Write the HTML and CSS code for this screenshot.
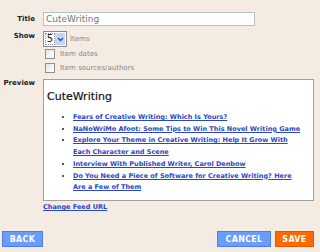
FILE: index.html
```html
<!DOCTYPE html>
<html lang="en">
<head>
    <meta charset="UTF-8">
    <title>Feed settings</title>
    <link rel="stylesheet" href="styles.css">
</head>
<body>
    <div class="page">
        <form class="feed-form">
            <label class="field-label" for="title">Title</label>
            <div class="field">
                <input class="title-input" id="title" type="text" value="CuteWriting">
            </div>

            <label class="field-label show-label" for="show">Show</label>
            <div class="field">
                <div class="show-row">
                    <span class="select-box">
                        <span class="select-value">5</span>
                        <span class="select-arrow">
                            <svg width="7" height="5" viewBox="0 0 7 5"><path d="M1 1 L3.5 3.5 L6 1" fill="none" stroke="#2b4fa8" stroke-width="1.4"/></svg>
                        </span>
                    </span>
                    <span class="muted">Items</span>
                </div>
                <label class="check-row"><span class="check"></span>Item dates</label>
                <label class="check-row"><span class="check"></span>Item sources/authors</label>
            </div>

            <div class="field-label preview-label">Preview</div>
            <div class="field">
                <div class="preview">
                    <h2>CuteWriting</h2>
                    <ul>
                        <li><a href="#">Fears of Creative Writing: Which Is Yours?</a></li>
                        <li><a href="#">NaNoWriMo Afoot: Some Tips to Win This Novel Writing Game</a></li>
                        <li><a href="#">Explore Your Theme in Creative Writing: Help It Grow With Each Character and Scene</a></li>
                        <li><a href="#">Interview With Published Writer, Carol Denbow</a></li>
                        <li><a href="#">Do You Need a Piece of Software for Creative Writing? Here Are a Few of Them</a></li>
                    </ul>
                </div>
                <a class="change-link" href="#">Change Feed URL</a>
            </div>
        </form>

        <div class="actions">
            <button class="btn btn-back">BACK</button>
            <div class="actions-right">
                <button class="btn btn-cancel">CANCEL</button>
                <button class="btn btn-save">SAVE</button>
            </div>
        </div>
    </div>
</body>
</html>
```

FILE: styles.css
```css
body {
    margin: 0;
    background-color: #f4ece2;
    font-family: 'DejaVu Sans', Verdana, sans-serif;
    color: #333;
}

.page {
    width: 320px;
    height: 252px;
    display: flex;
    flex-direction: column;
    justify-content: space-between;
    box-sizing: border-box;
    padding: 12px 6px 5px 2px;
}

.feed-form {
    display: grid;
    grid-template-columns: 33px 1fr;
    column-gap: 8px;
    row-gap: 4px;
}

.field-label {
    font-size: 7px;
    font-weight: bold;
    color: #222;
    text-align: right;
    padding-top: 3px;
}

.show-label {
    padding-top: 2px;
}

.field {
    display: flex;
    flex-direction: column;
}

.title-input {
    width: 212px;
    height: 14px;
    box-sizing: border-box;
    border: 1px solid #b5c0d2;
    padding: 0 2px;
    font-family: 'DejaVu Sans', sans-serif;
    font-size: 9px;
    color: #777;
    background: #fff;
}

.show-row {
    display: flex;
    align-items: center;
    gap: 3px;
    margin-top: 1px;
}

.select-box {
    display: flex;
    align-items: center;
    height: 16px;
    width: 24px;
    box-sizing: border-box;
    border: 1px solid #8a8a8a;
    background: #fff;
    padding: 1px;
}

.select-value {
    font-size: 10px;
    color: #222;
    flex: 1;
    text-align: center;
    border: 1px dotted #999;
    line-height: 10px;
}

.select-arrow {
    width: 10px;
    height: 12px;
    background: #c5d6f4;
    display: flex;
    align-items: center;
    justify-content: center;
}

.muted {
    font-size: 7px;
    color: #888;
}

.check-row {
    display: flex;
    align-items: center;
    gap: 5px;
    font-size: 7px;
    color: #888;
    margin-left: 2px;
    height: 14px;
}

.check {
    width: 8px;
    height: 8px;
    border: 1px solid #8e8f8f;
    background: linear-gradient(135deg, #e6e6e0, #fff);
}

.preview-label {
    padding-top: 0;
}

.preview {
    background: #fff;
    border: 1px solid #a0a0a0;
    height: 122px;
    box-sizing: border-box;
    padding: 10px 0 0 3px;
}

.preview h2 {
    margin: 0 0 9px;
    font-size: 11px;
    font-weight: normal;
    color: #111;
    -webkit-text-stroke: 0.2px #111;
}

.preview ul {
    margin: 0;
    padding: 0 10px 0 26px;
    list-style: disc;
}

.preview li {
    font-size: 6.5px;
    line-height: 11.7px;
    color: #222;
}

.preview a,
.change-link {
    color: #2a47c8;
    font-weight: bold;
    text-decoration: underline;
}

.change-link {
    font-size: 6.5px;
    margin-top: 2px;
}

.actions {
    display: flex;
    justify-content: space-between;
    align-items: flex-end;
}

.actions-right {
    display: flex;
    gap: 4px;
}

.btn {
    height: 16px;
    padding: 0;
    border: 1px solid #4f7de6;
    background: #6a9bff;
    color: #fff;
    font-family: 'DejaVu Sans', sans-serif;
    font-size: 8px;
    font-weight: bold;
    letter-spacing: 0.3px;
    cursor: pointer;
}

.btn-back {
    width: 41px;
}

.btn-cancel {
    width: 54px;
}

.btn-save {
    width: 39px;
    background: #ff6a00;
    border-color: #e05a00;
}
```
